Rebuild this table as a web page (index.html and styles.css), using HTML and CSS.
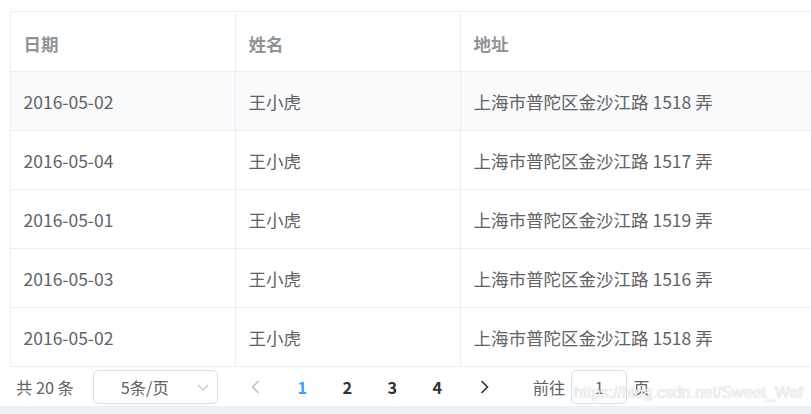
FILE: index.html
```html
<!DOCTYPE html>
<html lang="zh-CN">
<head>
<meta charset="utf-8">
<title>Table</title>
<link rel="stylesheet" href="styles.css">
</head>
<body>
<div class="page">
  <div class="table">
    <div class="row head">
      <div class="cell">日期</div>
      <div class="cell">姓名</div>
      <div class="cell">地址</div>
    </div>
    <div class="row hover">
      <div class="cell">2016-05-02</div>
      <div class="cell">王小虎</div>
      <div class="cell">上海市普陀区金沙江路 1518 弄</div>
    </div>
    <div class="row">
      <div class="cell">2016-05-04</div>
      <div class="cell">王小虎</div>
      <div class="cell">上海市普陀区金沙江路 1517 弄</div>
    </div>
    <div class="row">
      <div class="cell">2016-05-01</div>
      <div class="cell">王小虎</div>
      <div class="cell">上海市普陀区金沙江路 1519 弄</div>
    </div>
    <div class="row">
      <div class="cell">2016-05-03</div>
      <div class="cell">王小虎</div>
      <div class="cell">上海市普陀区金沙江路 1516 弄</div>
    </div>
    <div class="row">
      <div class="cell">2016-05-02</div>
      <div class="cell">王小虎</div>
      <div class="cell">上海市普陀区金沙江路 1518 弄</div>
    </div>
  </div>
  <div class="pager">
    <span class="total">共 20 条</span>
    <div class="select">
      <span class="select-text">5条/页</span>
      <svg class="select-arrow" width="12" height="7" viewBox="0 0 12 7"><polyline points="1,1 6,6 11,1" fill="none" stroke="#c0c4cc" stroke-width="1.2"/></svg>
    </div>
    <button class="nav prev" type="button"><svg width="9" height="14" viewBox="0 0 9 14"><polyline points="7.5,1 1.5,7 7.5,13" fill="none" stroke="#c0c4cc" stroke-width="1.6"/></svg></button>
    <ul class="pages">
      <li class="active">1</li>
      <li>2</li>
      <li>3</li>
      <li>4</li>
    </ul>
    <button class="nav next" type="button"><svg width="9" height="14" viewBox="0 0 9 14"><polyline points="1.5,1 7.5,7 1.5,13" fill="none" stroke="#303133" stroke-width="1.6"/></svg></button>
    <span class="jump">前往</span>
    <div class="jump-input">1</div>
    <span class="jump-unit">页</span>
    <span class="watermark">https://blog.csdn.net/Sweet_Waf</span>
  </div>
</div>
<div class="bottom-bar"></div>
</body>
</html>
```

FILE: styles.css
```css
html, body {
  margin: 0;
  padding: 0;
  background: #ffffff;
  overflow: hidden;
  width: 811px;
  height: 414px;
}

body {
  font-family: "Noto Sans CJK SC", "Noto Sans", sans-serif;
  color: #606266;
}

.page {
  padding: 11px 0 0 10px;
}

.table {
  width: 1100px;
  border-top: 1px solid #ebeef5;
  border-left: 1px solid #ebeef5;
}

.row {
  display: grid;
  grid-template-columns: 225px 225px 1fr;
  height: 59px;
}

.row.head {
  height: 60px;
}

.row.hover {
  background: #f9fafc;
}

.cell {
  box-sizing: border-box;
  border-right: 1px solid #ebeef5;
  border-bottom: 1px solid #ebeef5;
  padding: 0 12.5px;
  display: flex;
  align-items: center;
  font-size: 17.5px;
  color: #606266;
  white-space: nowrap;
}

.head .cell {
  font-weight: 700;
  color: #909399;
  padding-top: 3px;
}

.pager {
  position: relative;
  height: 39px;
  display: flex;
  align-items: center;
  padding-left: 6px;
  font-size: 16.25px;
  color: #606266;
  white-space: nowrap;
}

.total {
  margin-right: 19px;
}

.select {
  box-sizing: border-box;
  width: 125px;
  height: 34px;
  border: 1px solid #dcdfe6;
  border-radius: 5px;
  display: flex;
  align-items: center;
  position: relative;
  padding-left: 27px;
}

.select-text {
  color: #606266;
}

.select-arrow {
  position: absolute;
  right: 8px;
  top: 13px;
}

.nav {
  border: 0;
  background: transparent;
  padding: 0;
  height: 34px;
  display: flex;
  align-items: center;
  justify-content: center;
}

.prev {
  width: 40px;
  margin-left: 18px;
}

.next {
  width: 44px;
  margin-left: 3px;
}

.pages {
  list-style: none;
  margin: 0 0 0 4px;
  padding: 0;
  display: flex;
}

.pages li {
  width: 45px;
  text-align: center;
  font-weight: 700;
  color: #303133;
  font-size: 16.25px;
}

.pages li.active {
  color: #409eff;
}

.jump {
  margin-left: 26px;
  margin-right: 6px;
}

.jump-input {
  box-sizing: border-box;
  width: 56px;
  height: 34px;
  border: 1px solid #dcdfe6;
  border-radius: 5px;
  display: flex;
  align-items: center;
  justify-content: center;
  color: #606266;
  margin-right: 6px;
}

.watermark {
  position: absolute;
  left: 564px;
  top: 17px;
  font-family: "Liberation Sans", Arial, sans-serif;
  font-size: 16px;
  line-height: 18px;
  color: rgba(255, 255, 255, 0.85);
  text-shadow: 0 0 1px rgba(120, 120, 120, 0.55);
  pointer-events: none;
}

.bottom-bar {
  height: 10px;
  background: #eff2f5;
}
```
